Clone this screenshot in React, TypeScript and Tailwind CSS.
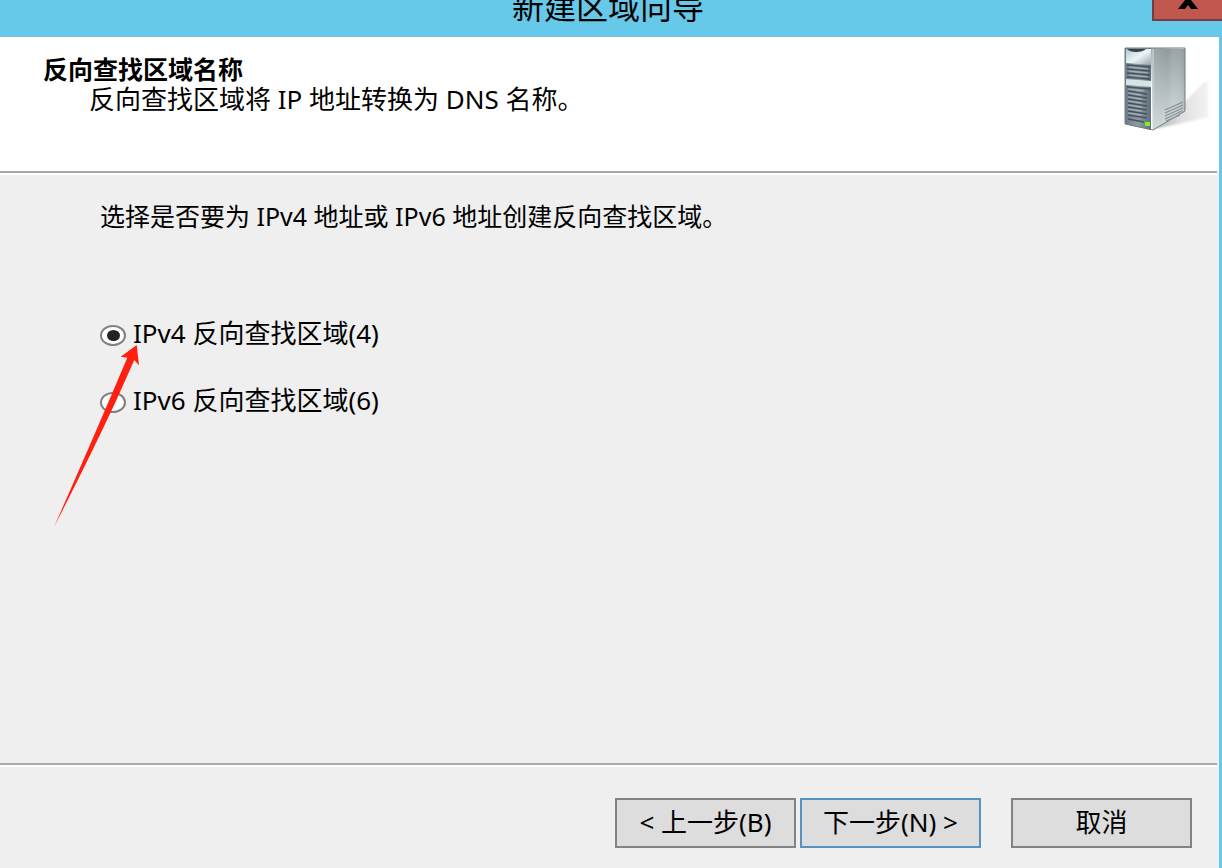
import React, { useState } from 'react'

const zones = [
  { value: 'ipv4', label: 'IPv4 反向查找区域(4)' },
  { value: 'ipv6', label: 'IPv6 反向查找区域(6)' },
]

function ServerIcon() {
  return <svg width="90" height="90" viewBox="0 0 90 90" aria-hidden="true">
    <defs>
      <linearGradient id="side" x1="0" y1="0" x2="0.6" y2="1">
        <stop offset="0" stopColor="#77868a" />
        <stop offset="0.45" stopColor="#a3afb1" />
        <stop offset="1" stopColor="#dce2e3" />
      </linearGradient>
      <linearGradient id="sideShade" x1="0" y1="0" x2="1" y2="0">
        <stop offset="0" stopColor="#fff" stopOpacity="0.3" />
        <stop offset="0.5" stopColor="#fff" stopOpacity="0" />
        <stop offset="1" stopColor="#48595e" stopOpacity="0.25" />
      </linearGradient>
      <linearGradient id="front" x1="0" y1="0" x2="1" y2="0">
        <stop offset="0" stopColor="#6d7985" />
        <stop offset="0.5" stopColor="#8f9ba6" />
        <stop offset="1" stopColor="#616d79" />
      </linearGradient>
      <linearGradient id="panel" x1="0" y1="0" x2="1" y2="1">
        <stop offset="0" stopColor="#afc6ce" />
        <stop offset="0.5" stopColor="#edf5f6" />
        <stop offset="1" stopColor="#94a5ab" />
      </linearGradient>
      <linearGradient id="shadow" x1="0" y1="0" x2="1" y2="0">
        <stop offset="0" stopColor="#b0b0b0" />
        <stop offset="0.5" stopColor="#dedede" />
        <stop offset="1" stopColor="#f3f3f3" />
      </linearGradient>
      <filter id="soft" x="-10%" y="-10%" width="120%" height="120%">
        <feGaussianBlur stdDeviation="1" />
      </filter>
    </defs>
    <path d="M34 84L64 58 83 38 88 36V72Q60 79 34 84Z" fill="url(#shadow)" filter="url(#soft)" />
    <path d="M31 3L65 4V67L33 85Z" fill="url(#side)" />
    <path d="M31 3L65 4V67L33 85Z" fill="url(#sideShade)" />
    <path d="M5 3L31 3V85L5 79Z" fill="url(#front)" />
    <path d="M6 4H31V20L6 18Z" fill="url(#panel)" />
    <path d="M7 4H26C22 8 10 8 7 4Z" fill="#36424d" />
    <path d="M6 34L31 36V42L6 40Z" fill="#d7e4e7" />
    <g stroke="#46525e" strokeWidth="1.6" fill="none">
      <path d="M7 20L30 22M7 24L30 26M7 28L30 30M7 32L30 34M7 42L30 44M8 46L27 49M8 50L27 53M8 54L27 57M8 58L27 61M8 62L27 65M8 66L27 69M8 70L27 73M8 74L24 77" />
    </g>
    <path d="M8 44L24 46M8 48L22 50M8 52L22 54M8 56L22 58M8 60L22 62M8 64L22 66M8 68L22 70M9 22L28 24M9 26L28 28M9 30L28 32" stroke="#a8b3bc" fill="none" />
    <path d="M33 4V84" stroke="#d3dbdc" strokeWidth="1" />
    <path d="M5 3H65V66L33 85L5 79Z" fill="none" stroke="#727e81" strokeWidth="1" />
    <g stroke="#839094" strokeWidth="1.3" fill="none">
      <path d="M45 65L63 57M45 68L63 60M45 71L63 63M45 74L62 66M46 76L60 70" />
    </g>
    <path d="M25 77H30V81H25Z" fill="#79f21d" />
  </svg>
}

function Arrow() {
  return <svg className="pointer-events-none absolute -left-12 top-[22px]" width="90" height="190" viewBox="0 0 90 190" aria-hidden="true">
    <path d="M84.700 5L68.700 16.700L75.300 17.700L56 63Q32 119 2 187Q36 121 64 61L82.300 20L87 25.300Z" fill="#ff2010" />
  </svg>
}

interface WizardButtonProps {
  children: React.ReactNode
  primary?: boolean
}

function WizardButton({ children, primary }: WizardButtonProps) {
  return <button type="button" className={`h-[50px] w-[181px] border-2 bg-[#dddddd] pb-0.5 text-[26px] whitespace-pre ${primary ? 'border-[#5793c2]' : 'border-[#838383]'}`}>
    {children}
  </button>
}

function Separator() {
  return <div className="mr-[2px] h-[4px] shrink-0 border-t-2 border-b-2 border-t-[#a9a9a9] border-b-white" />
}

export default function App() {
  const [zone, setZone] = useState('ipv4')

  return <div className="flex min-h-screen flex-col bg-[#67c9ea] pr-[3px] font-['Noto_Sans','Noto_Sans_CJK_SC',sans-serif] text-[25px] leading-[30px] text-black">
    <header className="-mr-[3px] flex h-[37px] shrink-0 items-start overflow-hidden border-b border-[#8ab8cc]">
      <h1 className="-mt-[17px] flex-1 pl-16 text-center text-[32px] leading-[48px]">新建区域向导</h1>
      <button type="button" aria-label="关闭" className="flex h-[21px] w-[70px] items-end justify-center border-2 border-t-0 border-r-0 border-[#713f43] bg-[#c0584f] pb-[10px]">
        <svg width="20" height="18" viewBox="0 0 20 18" aria-hidden="true">
          <path d="M0 0H7L10 5L13 0H20L13 9L20 18H13L10 14L7 18H0L7 9Z" fill="#000" />
        </svg>
      </button>
    </header>

    <section className="flex h-[134px] shrink-0 items-start justify-between bg-white pt-[17px] pr-[9px] pl-[43px]">
      <div>
        <h2 className="font-bold">反向查找区域名称</h2>
        <p className="pl-[46px] text-[26px]">反向查找区域将 IP 地址转换为 DNS 名称。</p>
      </div>
      <div className="-mt-[9px]"><ServerIcon /></div>
    </section>

    <main className="flex flex-1 flex-col bg-[#efefef]">
      <Separator />
      <div className="flex-1 pt-[26px] pl-[100px]">
        <p>选择是否要为 IPv4 地址或 IPv6 地址创建反向查找区域。</p>
        <div role="radiogroup" className="relative mt-[87px] flex flex-col items-start gap-[37px] text-[26px]">
          {zones.map(({ value, label }) => <label key={value} className="flex items-center gap-[7px]">
            <input
              type="radio"
              name="zone"
              value={value}
              checked={zone === value}
              onChange={() => setZone(value)}
              className="mt-1 flex h-[21px] w-[26px] appearance-none items-center justify-center rounded-[50%] border-2 border-[#808080] bg-white checked:before:h-[11px] checked:before:w-[13px] checked:before:rounded-[50%] checked:before:bg-[#222222]"
            />
            {label}
          </label>)}
          <Arrow />
        </div>
      </div>
      <Separator />
      <footer className="flex shrink-0 justify-end pt-[31px] pr-[27px] pb-5">
        <WizardButton>{'< 上一步(B)'}</WizardButton>
        <div className="ml-1"><WizardButton primary>{'下一步(N) >'}</WizardButton></div>
        <div className="ml-[30px]"><WizardButton>取消</WizardButton></div>
      </footer>
    </main>
  </div>
}
